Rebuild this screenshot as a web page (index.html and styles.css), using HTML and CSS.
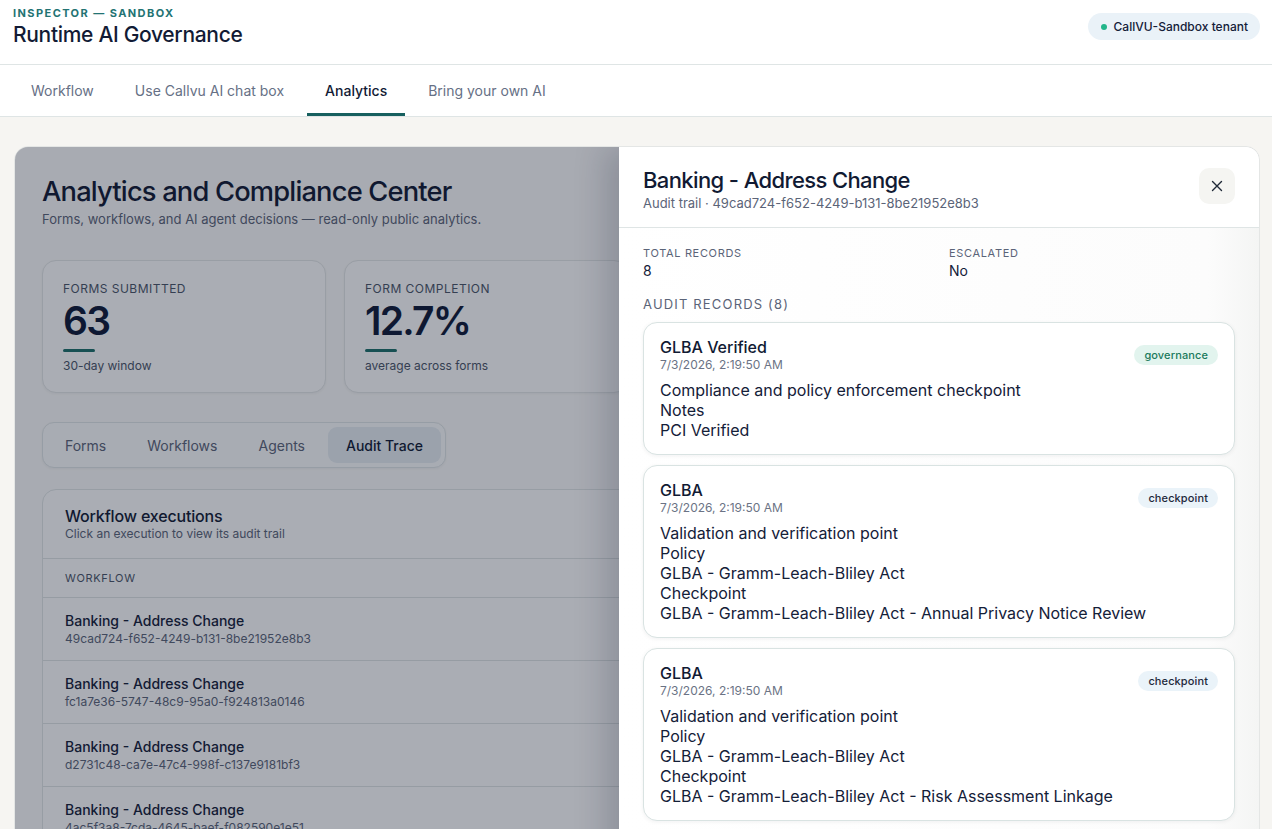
FILE: index.html
```html
<!DOCTYPE html>
<html lang="en">
<head>
<meta charset="utf-8">
<title>Runtime AI Governance</title>
<link rel="stylesheet" href="styles.css">
</head>
<body>
<header class="topbar">
  <div class="brand">
    <div class="eyebrow">INSPECTOR — SANDBOX</div>
    <h1 class="app-title">Runtime AI Governance</h1>
  </div>
  <div class="tenant"><span class="dot"></span>CallVU-Sandbox tenant</div>
</header>
<nav class="tabs">
  <a class="tab">Workflow</a>
  <a class="tab">Use Callvu AI chat box</a>
  <a class="tab active">Analytics</a>
  <a class="tab">Bring your own AI</a>
</nav>
<main class="main">
  <section class="panel">
    <h2 class="panel-title">Analytics and Compliance Center</h2>
    <p class="panel-sub">Forms, workflows, and AI agent decisions — read-only public analytics.</p>

    <div class="stats">
      <div class="stat">
        <div class="stat-label">FORMS SUBMITTED</div>
        <div class="stat-value">63</div>
        <div class="stat-bar"></div>
        <div class="stat-note">30-day window</div>
      </div>
      <div class="stat">
        <div class="stat-label">FORM COMPLETION</div>
        <div class="stat-value">12.7%</div>
        <div class="stat-bar"></div>
        <div class="stat-note">average across forms</div>
      </div>
      <div class="stat">
        <div class="stat-label">WORKFLOW RUNS</div>
        <div class="stat-value">48</div>
        <div class="stat-bar"></div>
        <div class="stat-note">executions</div>
      </div>
      <div class="stat">
        <div class="stat-label">AGENT DECISIONS</div>
        <div class="stat-value">112</div>
        <div class="stat-bar"></div>
        <div class="stat-note">logged decisions</div>
      </div>
    </div>

    <div class="segmented">
      <button class="seg">Forms</button>
      <button class="seg">Workflows</button>
      <button class="seg">Agents</button>
      <button class="seg active">Audit Trace</button>
    </div>

    <div class="table-card">
      <div class="table-head">
        <div class="table-title">Workflow executions</div>
        <div class="table-sub">Click an execution to view its audit trail</div>
      </div>
      <div class="col-head">WORKFLOW</div>
      <div class="row"><div class="row-title">Banking - Address Change</div><div class="row-id">49cad724-f652-4249-b131-8be21952e8b3</div></div>
      <div class="row"><div class="row-title">Banking - Address Change</div><div class="row-id">fc1a7e36-5747-48c9-95a0-f924813a0146</div></div>
      <div class="row"><div class="row-title">Banking - Address Change</div><div class="row-id">d2731c48-ca7e-47c4-998f-c137e9181bf3</div></div>
      <div class="row"><div class="row-title">Banking - Address Change</div><div class="row-id">4ac5f3a8-7cda-4645-baef-f082590e1e51</div></div>
      <div class="row"><div class="row-title">Banking - Address Change</div><div class="row-id">7b21e0c9-11af-4d5e-8c3a-2e90f4d1a7c2</div></div>
    </div>

    <div class="overlay"></div>

    <aside class="drawer">
      <div class="drawer-head">
        <div>
          <div class="drawer-title">Banking - Address Change</div>
          <div class="drawer-sub">Audit trail · 49cad724-f652-4249-b131-8be21952e8b3</div>
        </div>
        <button class="close" aria-label="Close">
          <svg width="16" height="16" viewBox="0 0 16 16" fill="none" stroke="#1f2937" stroke-width="1.4" stroke-linecap="round"><path d="M3.5 3.5l9 9M12.5 3.5l-9 9"/></svg>
        </button>
      </div>
      <div class="drawer-body">
        <div class="meta">
          <div>
            <div class="meta-label">TOTAL RECORDS</div>
            <div class="meta-value">8</div>
          </div>
          <div>
            <div class="meta-label">ESCALATED</div>
            <div class="meta-value">No</div>
          </div>
        </div>
        <div class="section-label">AUDIT RECORDS (8)</div>
        <div class="records">
          <div class="record">
            <div class="record-head">
              <div>
                <div class="record-title">GLBA Verified</div>
                <div class="record-date">7/3/2026, 2:19:50 AM</div>
              </div>
              <span class="badge gov">governance</span>
            </div>
            <div class="record-body">Compliance and policy enforcement checkpoint<br>Notes<br>PCI Verified</div>
          </div>
          <div class="record">
            <div class="record-head">
              <div>
                <div class="record-title">GLBA</div>
                <div class="record-date">7/3/2026, 2:19:50 AM</div>
              </div>
              <span class="badge chk">checkpoint</span>
            </div>
            <div class="record-body">Validation and verification point<br>Policy<br>GLBA - Gramm-Leach-Bliley Act<br>Checkpoint<br>GLBA - Gramm-Leach-Bliley Act - Annual Privacy Notice Review</div>
          </div>
          <div class="record">
            <div class="record-head">
              <div>
                <div class="record-title">GLBA</div>
                <div class="record-date">7/3/2026, 2:19:50 AM</div>
              </div>
              <span class="badge chk">checkpoint</span>
            </div>
            <div class="record-body">Validation and verification point<br>Policy<br>GLBA - Gramm-Leach-Bliley Act<br>Checkpoint<br>GLBA - Gramm-Leach-Bliley Act - Risk Assessment Linkage</div>
          </div>
          <div class="record">
            <div class="record-head">
              <div>
                <div class="record-title">GLBA</div>
                <div class="record-date">7/3/2026, 2:19:50 AM</div>
              </div>
              <span class="badge chk">checkpoint</span>
            </div>
            <div class="record-body">Validation and verification point<br>Policy<br>GLBA - Gramm-Leach-Bliley Act</div>
          </div>
        </div>
      </div>
    </aside>
  </section>
</main>
</body>
</html>
```
FILE: styles.css
```css
* { box-sizing: border-box; }
html, body { margin: 0; padding: 0; }
body {
  font-family: Inter, "Noto Sans", "Liberation Sans", sans-serif;
  color: #111a33;
  background: #f6f5f2;
  -webkit-font-smoothing: antialiased;
}
h1, h2, p { margin: 0; }
button { font-family: inherit; border: 0; background: none; cursor: pointer; padding: 0; }

/* header */
.topbar {
  height: 65px;
  background: #fff;
  border-bottom: 1px solid #dfe5e5;
  display: flex;
  justify-content: space-between;
  align-items: flex-start;
  padding: 6px 12px 0 13px;
}
.eyebrow {
  font-size: 11px;
  line-height: 14px;
  font-weight: 700;
  letter-spacing: 0.13em;
  color: #237373;
}
.app-title {
  font-size: 21px;
  line-height: 28px;
  margin-top: 1px;
  font-weight: 500;
  letter-spacing: -0.015em;
  color: #121b35;
}
.tenant {
  margin-top: 7px;
  height: 27px;
  padding: 0 12px 0 13px;
  border-radius: 14px;
  background: #eaf2f8;
  display: flex;
  align-items: center;
  gap: 7px;
  font-size: 12px;
  font-weight: 500;
  color: #142038;
}
.dot { width: 6px; height: 6px; border-radius: 50%; background: #22b58a; }

/* tabs */
.tabs {
  height: 52px;
  background: #fff;
  border-bottom: 1px solid #dfe5e5;
  display: flex;
  gap: 5px;
  padding: 0 13px;
}
.tab {
  padding: 2px 18px 0;
  display: flex;
  align-items: center;
  font-size: 14px;
  color: #667085;
  border-bottom: 3px solid transparent;
}
.tab.active { color: #121b35; font-weight: 500; border-bottom-color: #17605f; }

/* main */
.main { padding: 29px 12px 0 14px; }
.panel {
  position: relative;
  overflow: hidden;
  background: #fbfbfa;
  border: 1px solid #e4e6e5;
  border-radius: 14px;
  padding: 28px 27px 40px;
  min-height: 900px;
}
.panel-title {
  font-size: 27.3px;
  line-height: 34px;
  font-weight: 500;
  letter-spacing: -0.03em;
  color: #111a33;
}
.panel-sub { font-size: 13px; line-height: 20px; color: #5b6478; }

.stats {
  margin-top: 31px;
  display: grid;
  grid-template-columns: repeat(4, 1fr);
  gap: 18px;
}
.stat {
  background: #fdfdfd;
  border: 1px solid #e3e6e6;
  border-radius: 14px;
  padding: 20px 20px 18px;
  box-shadow: 0 1px 3px rgba(15, 23, 42, 0.05);
}
.stat-label { font-size: 12px; line-height: 16px; letter-spacing: 0.04em; color: #4b5568; }
.stat-value {
  font-size: 39px;
  line-height: 44px;
  font-weight: 600;
  letter-spacing: -0.045em;
  color: #0f1a36;
  margin-top: 2px;
}
.stat-bar { width: 32px; height: 3px; border-radius: 2px; background: #1d6f69; margin-top: 6px; }
.stat-note { font-size: 12px; line-height: 16px; color: #4b5568; margin-top: 6px; }

.segmented {
  margin-top: 29px;
  display: inline-flex;
  gap: 5px;
  padding: 4px;
  border: 1px solid #dfe5e6;
  border-radius: 12px;
  background: #fbfcfc;
  box-shadow: 0 1px 3px rgba(15, 23, 42, 0.05);
}
.seg {
  height: 36px;
  padding: 0 18px;
  border-radius: 9px;
  font-size: 14px;
  color: #5b6478;
}
.seg.active { background: #e6edf2; color: #121b35; font-weight: 500; }

.table-card {
  margin-top: 21px;
  background: #fdfdfd;
  border: 1px solid #e0e5e5;
  border-radius: 14px;
}
.table-head { padding: 16px 22px 16px; border-bottom: 1px solid #dfe4e4; }
.table-title { font-size: 16px; line-height: 20px; font-weight: 500; letter-spacing: -0.01em; color: #111a33; }
.table-sub { font-size: 12px; line-height: 16px; color: #5b6478; }
.col-head {
  padding: 0 22px;
  height: 39px;
  display: flex;
  align-items: center;
  font-size: 11px;
  letter-spacing: 0.06em;
  color: #4b5568;
  border-bottom: 1px solid #dfe4e4;
}
.row { padding: 13px 22px 13px; border-bottom: 1px solid #dfe4e4; }
.row-title { font-size: 14px; line-height: 20px; font-weight: 500; color: #142038; }
.row-id { font-size: 12px; line-height: 16px; color: #5b6478; }

/* overlay & drawer */
.overlay {
  position: absolute;
  inset: 0;
  background: rgba(15, 23, 42, 0.35);
}
.drawer {
  position: absolute;
  top: 0;
  right: 0;
  bottom: 0;
  width: 640px;
  background: linear-gradient(90deg, #ffffff 0%, #fcfcfc 92%, #f4f5f4 100%);
  box-shadow: -14px 0 30px rgba(15, 23, 42, 0.18);
  display: flex;
  flex-direction: column;
}
.drawer-head {
  background: #fff;
  border-bottom: 1px solid #dfe5e5;
  display: flex;
  justify-content: space-between;
  align-items: flex-start;
  padding: 19px 24px 15px;
}
.drawer-title { font-size: 22px; line-height: 28px; font-weight: 500; letter-spacing: -0.028em; color: #111a33; }
.drawer-sub { font-size: 13px; line-height: 18px; color: #5b6478; }
.close {
  width: 36px;
  height: 36px;
  margin-top: 2px;
  border-radius: 10px;
  background: #f5f5f2;
  display: flex;
  align-items: center;
  justify-content: center;
}

.drawer-body { padding: 18px 24px 0; }
.meta { display: grid; grid-template-columns: 1fr 1fr; gap: 20px; }
.meta-label { font-size: 11px; line-height: 14px; letter-spacing: 0.06em; color: #5b6478; }
.meta-value { font-size: 14px; line-height: 20px; color: #142038; margin-top: 1px; }
.section-label {
  margin-top: 14px;
  font-size: 13px;
  line-height: 18px;
  letter-spacing: 0.09em;
  color: #5b6478;
}
.records { margin-top: 9px; display: flex; flex-direction: column; gap: 10px; }
.record {
  background: #fff;
  border: 1px solid #d9e3e2;
  border-radius: 14px;
  padding: 14px 16px 14px;
  box-shadow: 0 1px 4px rgba(15, 23, 42, 0.06);
}
.record-head { display: flex; justify-content: space-between; align-items: center; }
.record-title { font-size: 16px; line-height: 20px; font-weight: 500; color: #111a33; }
.record-date { font-size: 12px; line-height: 16px; color: #6b7385; }
.record-body { margin-top: 7px; font-size: 16px; line-height: 20px; color: #142038; }
.badge {
  height: 20px;
  padding: 0 10px;
  border-radius: 10px;
  font-size: 11px;
  font-weight: 500;
  display: inline-flex;
  align-items: center;
  letter-spacing: 0.01em;
}
.badge.gov { background: #e2f4ee; color: #1a7a5c; }
.badge.chk { background: #eaf3f9; color: #1e293b; }
```
